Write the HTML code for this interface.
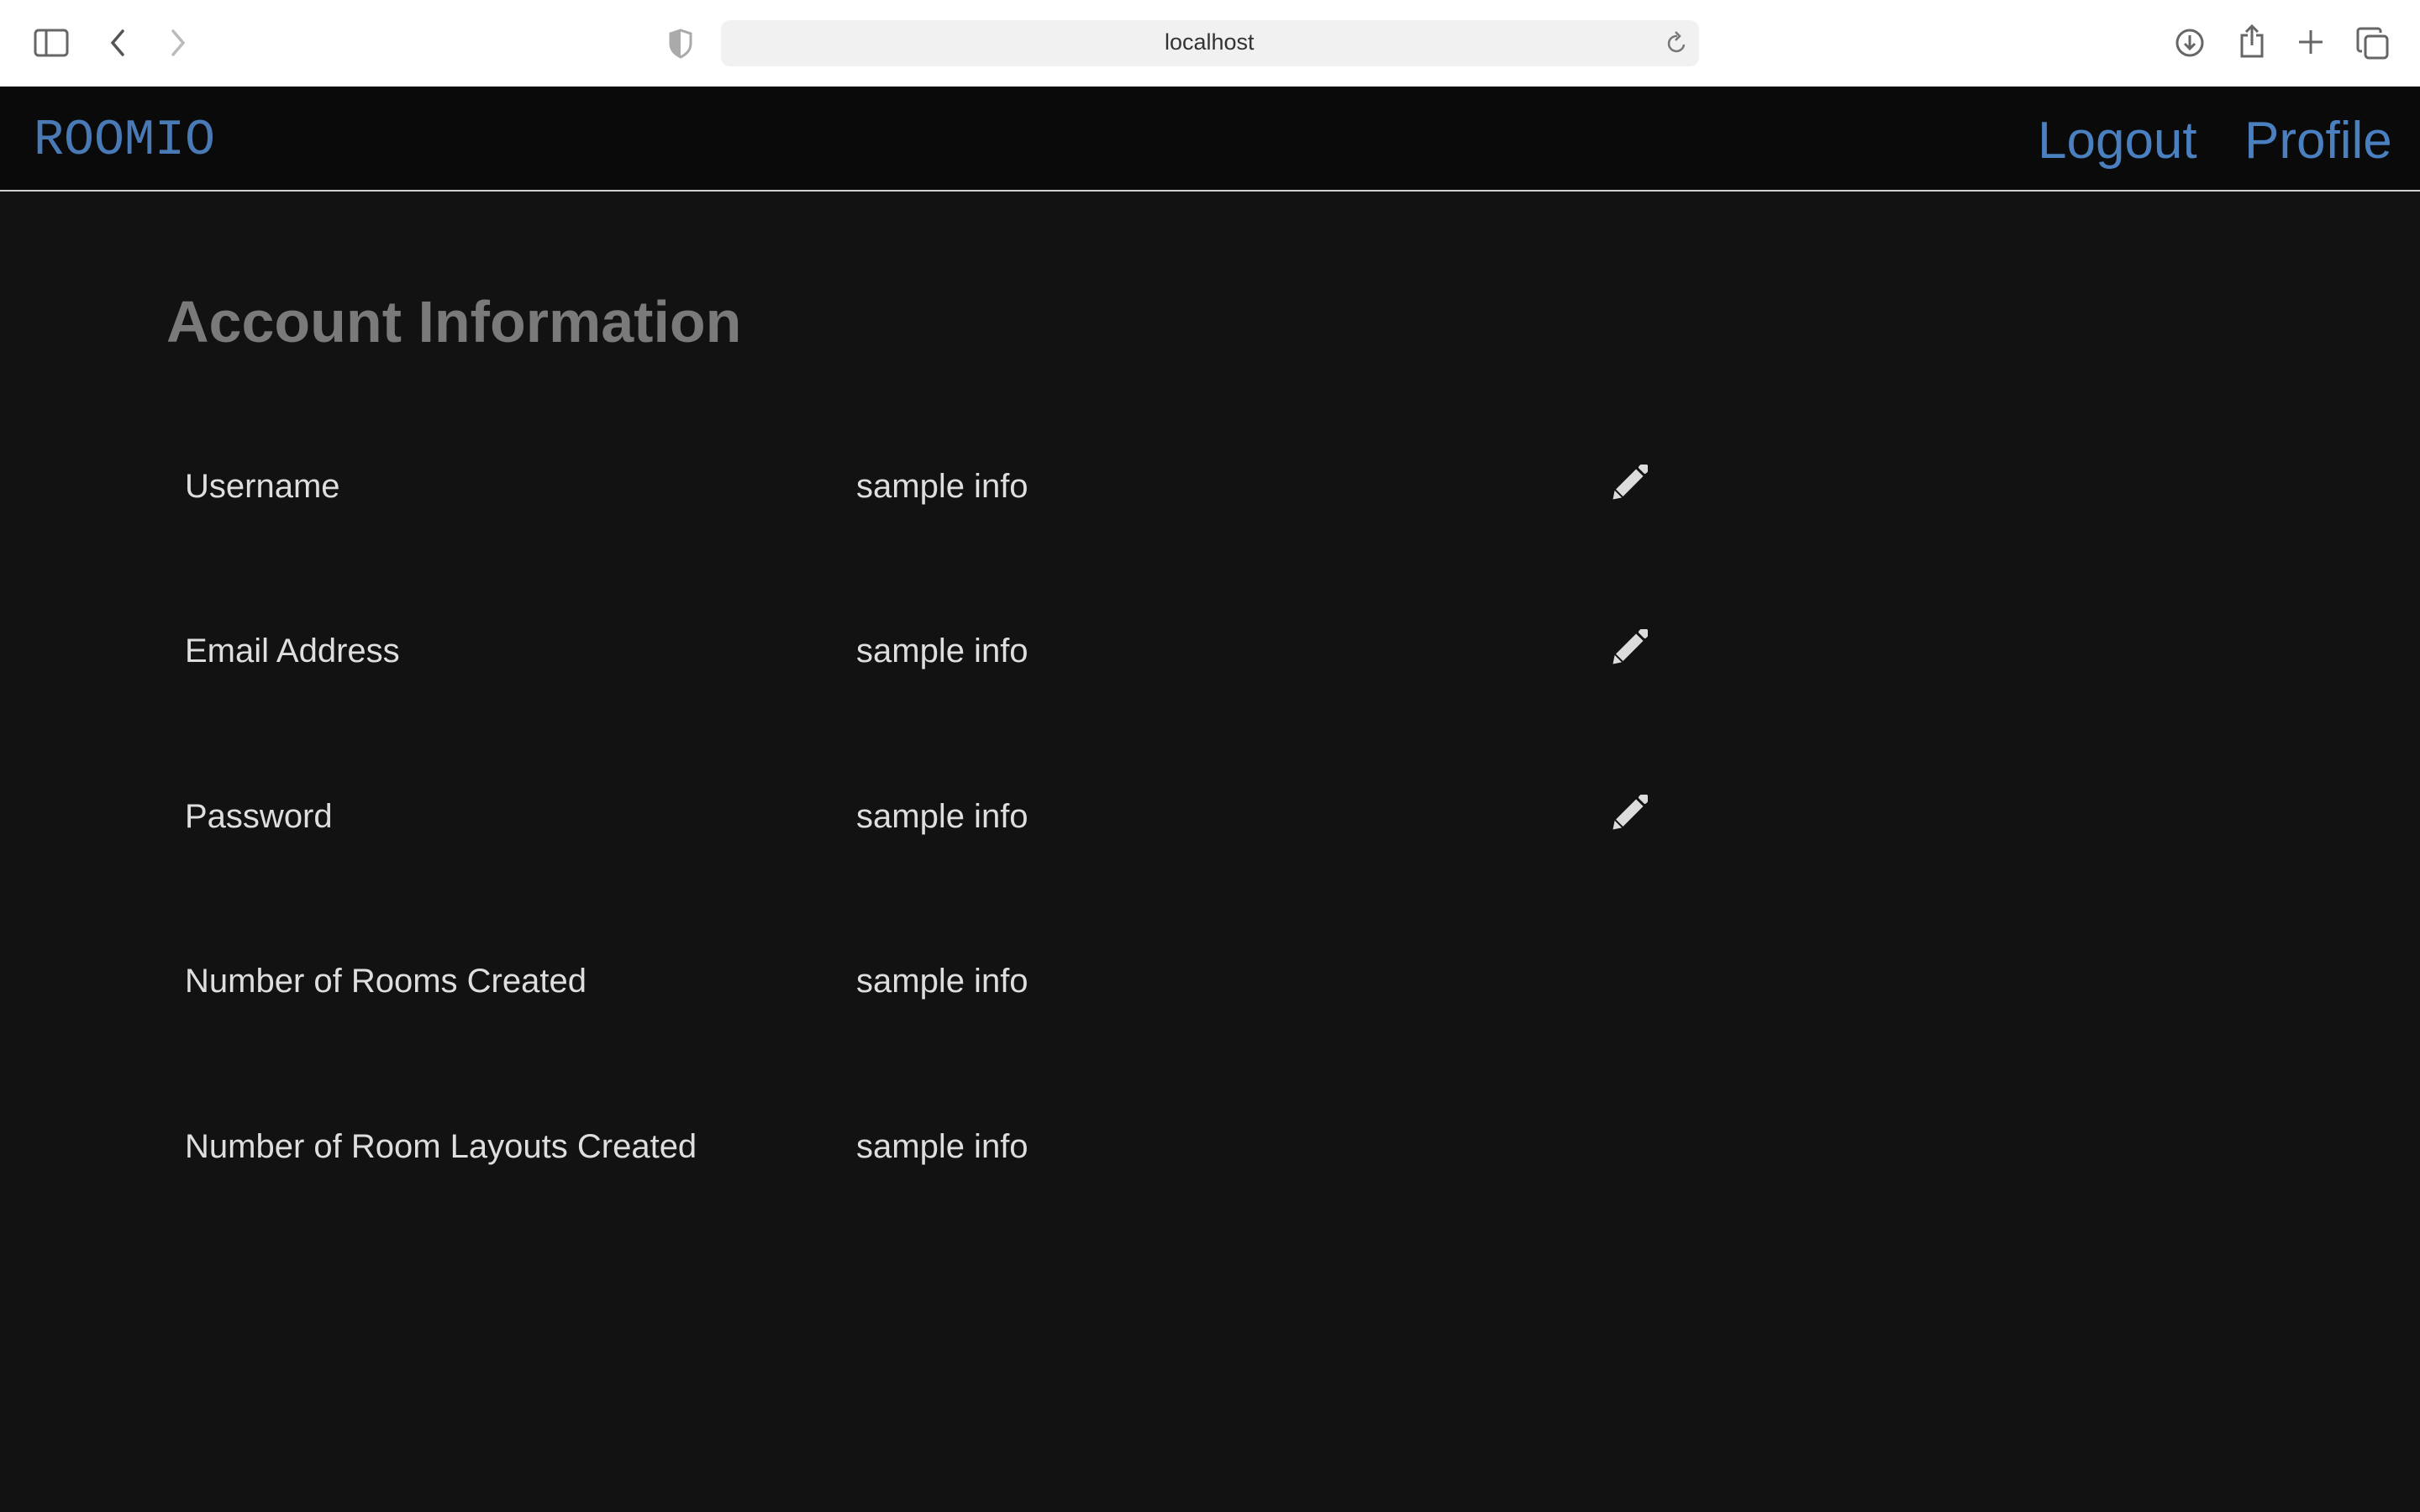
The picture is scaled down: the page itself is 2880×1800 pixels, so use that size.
<!DOCTYPE html>
<html><head><meta charset="utf-8"><style>
*{margin:0;padding:0;box-sizing:border-box}
html,body{width:2880px;height:1800px;overflow:hidden;background:#121212;font-family:"Liberation Sans",Arial,sans-serif}
.abs{position:absolute;white-space:nowrap;line-height:1}
#chrome{position:absolute;left:0;top:0;width:2880px;height:103px;background:#fff}
#url{position:absolute;left:858px;top:24px;width:1164px;height:55px;border-radius:11px;background:#f1f1f1}
#nav{position:absolute;left:0;top:103px;width:2880px;height:125px;background:#0a0a0a;border-bottom:2px solid #d0d0d0}
.lbl{font-size:40px;color:#dedede}
</style></head><body>
<div id="chrome">
<svg class="abs" style="left:40px;top:34px" width="42" height="34" viewBox="0 0 42 34" fill="none" stroke="#666" stroke-width="3"><rect x="2" y="2" width="38" height="30" rx="4"/><line x1="15" y1="2" x2="15" y2="32"/></svg>
<svg class="abs" style="left:130px;top:34px" width="20" height="34" viewBox="0 0 20 34" fill="none" stroke="#555" stroke-width="3.5" stroke-linecap="round"><path d="M16 3 L4 17 L16 31"/></svg>
<svg class="abs" style="left:202px;top:34px" width="20" height="34" viewBox="0 0 20 34" fill="none" stroke="#bbb" stroke-width="3.5" stroke-linecap="round"><path d="M4 3 L16 17 L4 31"/></svg>
<svg class="abs" style="left:796px;top:34px" width="28" height="36" viewBox="0 0 28 36"><path d="M14 2 L26 6 V18 C26 26 20 31 14 34 C8 31 2 26 2 18 V6 Z" fill="none" stroke="#aaa" stroke-width="3"/><path d="M14 2 L2 6 V18 C2 26 8 31 14 34 Z" fill="#aaa"/></svg>
<div id="url"></div>
<div class="abs" style="left:1386px;top:37px;font-size:27px;color:#333">localhost</div>
<svg class="abs" style="left:1982px;top:36px" width="28" height="30" viewBox="0 0 28 30" fill="none" stroke="#777" stroke-width="2.5"><path d="M22 17 A9 9 0 1 1 14 7"/><path d="M12 2 L17 7 L12 12"/></svg>
<svg class="abs" style="left:2588px;top:32px" width="36" height="38" viewBox="0 0 36 38" fill="none" stroke="#666" stroke-width="3"><circle cx="18" cy="19" r="15"/><path d="M18 10 V26 M12 20 L18 26 L24 20"/></svg>
<svg class="abs" style="left:2664px;top:28px" width="32" height="42" viewBox="0 0 32 42" fill="none" stroke="#666" stroke-width="3"><path d="M11 14 H4 V39 H28 V14 H21"/><path d="M16 3 V26 M9 10 L16 3 L23 10"/></svg>
<svg class="abs" style="left:2735px;top:33px" width="30" height="34" viewBox="0 0 30 34" fill="none" stroke="#666" stroke-width="3"><path d="M15 3 V31 M1 17 H29"/></svg>
<svg class="abs" style="left:2804px;top:32px" width="40" height="40" viewBox="0 0 40 40" fill="none" stroke="#666" stroke-width="3"><rect x="11" y="11" width="26" height="26" rx="4"/><path d="M7 29 H5 A3 3 0 0 1 2 26 V5 A3 3 0 0 1 5 2 H26 A3 3 0 0 1 29 5 V7"/></svg>
</div>
<div id="nav"></div>
<div class="abs" style="left:40px;top:138px;font-family:'Liberation Mono',monospace;font-size:60px;color:#4a7ab5">ROOMIO</div>
<div class="abs" style="left:2425px;top:137px;font-size:62px;color:#4a7fc0">Logout</div>
<div class="abs" style="left:2671px;top:137px;font-size:62px;color:#4a7fc0">Profile</div>
<div class="abs" style="left:198px;top:348px;font-size:70px;font-weight:bold;color:#7a7a7a">Account Information</div>

<div class="abs lbl" style="left:220px;top:559px">Username</div>
<div class="abs lbl" style="left:1019px;top:559px">sample info</div>
<div class="abs lbl" style="left:220px;top:755px">Email Address</div>
<div class="abs lbl" style="left:1019px;top:755px">sample info</div>
<div class="abs lbl" style="left:220px;top:952px">Password</div>
<div class="abs lbl" style="left:1019px;top:952px">sample info</div>
<div class="abs lbl" style="left:220px;top:1148px">Number of Rooms Created</div>
<div class="abs lbl" style="left:1019px;top:1148px">sample info</div>
<div class="abs lbl" style="left:220px;top:1345px">Number of Room Layouts Created</div>
<div class="abs lbl" style="left:1019px;top:1345px">sample info</div>

<svg class="abs" style="left:1919px;top:553px" width="42" height="42" viewBox="0 0 42 42"><g transform="rotate(-45 21 21)" fill="#dcdcdc"><path d="M-8 21 L1 15 L1 27 Z"/><rect x="3" y="15" width="34" height="12"/><rect x="40" y="15" width="10" height="12" rx="2"/></g></svg>
<svg class="abs" style="left:1919px;top:749px" width="42" height="42" viewBox="0 0 42 42"><g transform="rotate(-45 21 21)" fill="#dcdcdc"><path d="M-8 21 L1 15 L1 27 Z"/><rect x="3" y="15" width="34" height="12"/><rect x="40" y="15" width="10" height="12" rx="2"/></g></svg>
<svg class="abs" style="left:1919px;top:946px" width="42" height="42" viewBox="0 0 42 42"><g transform="rotate(-45 21 21)" fill="#dcdcdc"><path d="M-8 21 L1 15 L1 27 Z"/><rect x="3" y="15" width="34" height="12"/><rect x="40" y="15" width="10" height="12" rx="2"/></g></svg>
</body></html>
